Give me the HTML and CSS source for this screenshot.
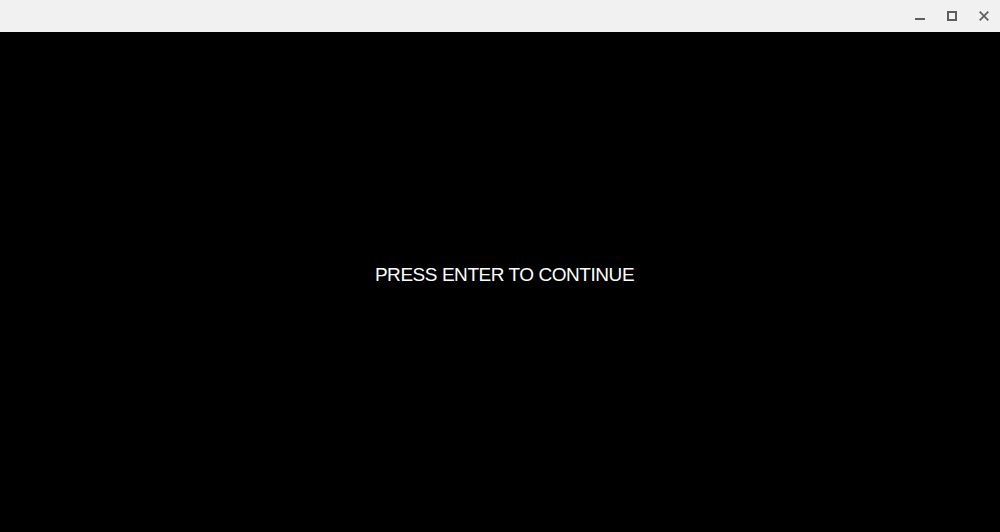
FILE: index.html
```html
<!DOCTYPE html>
<html>
<head>
<meta charset="utf-8">
<link rel="stylesheet" href="styles.css">
</head>
<body>
<div class="window">
  <div class="titlebar">
    <div class="controls">
      <span class="ctl"><svg width="10" height="10" viewBox="0 0 10 10"><rect x="0" y="7" width="10" height="2" fill="#5f5f5f"/></svg></span>
      <span class="ctl"><svg width="10" height="10" viewBox="0 0 10 10"><rect x="1" y="1" width="8" height="8" fill="none" stroke="#5f5f5f" stroke-width="2"/></svg></span>
      <span class="ctl"><svg width="10" height="10" viewBox="0 0 10 10"><path d="M0.7 0.7 L9.3 9.3 M9.3 0.7 L0.7 9.3" stroke="#5f5f5f" stroke-width="1.8"/></svg></span>
    </div>
  </div>
  <div class="screen">
    <div class="message">PRESS ENTER TO CONTINUE</div>
  </div>
</div>
</body>
</html>
```

FILE: styles.css
```css
html, body {
  margin: 0;
  padding: 0;
  width: 1000px;
  height: 532px;
  overflow: hidden;
}
.window {
  display: flex;
  flex-direction: column;
  height: 532px;
}
.titlebar {
  height: 32px;
  background: #f1f1f1;
  display: flex;
  justify-content: flex-end;
  align-items: flex-start;
}
.controls {
  display: flex;
  gap: 22px;
  padding: 11px 11px 0 0;
}
.ctl {
  display: block;
  width: 10px;
  height: 10px;
}
.ctl svg { display: block; }
.screen {
  flex: 1;
  background: #000;
  display: flex;
  justify-content: center;
  padding: 231px 0 0 9px;
}
.message {
  color: #fff;
  font-family: "Liberation Sans", Arial, sans-serif;
  font-size: 19px;
  letter-spacing: -0.45px;
  line-height: 24px;
  height: 24px;
}
```
